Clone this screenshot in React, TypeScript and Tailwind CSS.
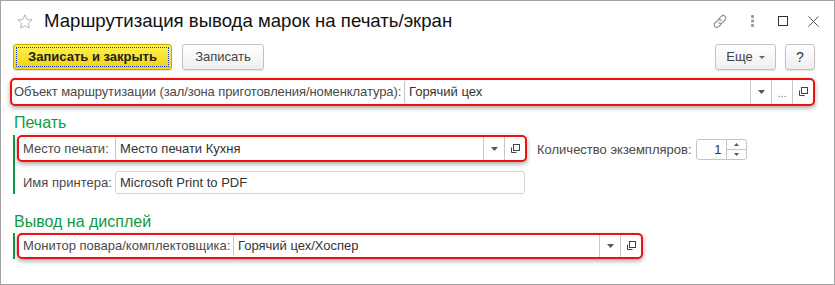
import React from "react";

const Arrow = () => (
  <svg width="7" height="4" viewBox="0 0 7 4"><path d="M0 0h7L3.5 4z" fill="#555" /></svg>
);

const OpenIcon = () => (
  <svg width="12" height="12" viewBox="0 0 12 12" fill="none" stroke="#444" strokeWidth="1">
    <rect x="4.5" y="1.5" width="6" height="6" />
    <path d="M2.5 4.5v5h5" />
  </svg>
);

const Btn = ({ children }: { children: React.ReactNode }) => (
  <div className="flex items-center justify-center w-[21px] border-l border-[#c8c8c8]">{children}</div>
);

function RedField({
  label,
  value,
  w,
  h,
  labelW,
  labelPl,
  ellipsis,
  tight,
}: {
  label: string;
  value: string;
  w: string;
  h: string;
  labelW: string;
  labelPl: string;
  ellipsis?: boolean;
  tight?: boolean;
}) {
  return (
    <div className={`flex ${w} ${h} border-2 border-[#f01010] rounded-[5px] bg-white shadow-[0_2px_5px_rgba(0,0,0,0.35)] overflow-hidden`}>
      <div
        className={`flex items-center ${labelW} ${labelPl} shrink-0 text-[#4a4a4a] whitespace-nowrap ${
          tight ? "tracking-[-0.09px]" : ""
        }`}
      >
        {label}
      </div>
      <div className="flex flex-1 border-l border-[#c4c4c4] rounded-l-[3px]">
        <div className="flex-1 flex items-center pl-[4px] text-[#333]">{value}</div>
        <Btn>
          <Arrow />
        </Btn>
        {ellipsis && (
          <Btn>
            <span className="text-[#777] text-[11px] leading-none mt-[3px]">...</span>
          </Btn>
        )}
        <Btn>
          <OpenIcon />
        </Btn>
      </div>
    </div>
  );
}

export default function App() {
  return (
    <div
      className="w-[835px] h-[285px] border border-[#a3a3a3] bg-white overflow-hidden text-[13px] flex flex-col"
      style={{ fontFamily: '"Liberation Sans", Arial, sans-serif' }}
    >
      {/* Title */}
      <div className="h-[40px] flex items-center shrink-0">
        <svg className="ml-[16px]" width="16" height="15" viewBox="0 0 16 15" fill="none" stroke="#b5b5b5" strokeWidth="1">
          <path d="M8 0.8l2.1 4.6 5 .5-3.8 3.4 1.1 4.9L8 11.7l-4.4 2.5 1.1-4.9L0.9 5.9l5-.5z" />
        </svg>
        <div className="ml-[11px] text-[18.6px] text-[#111] whitespace-nowrap">Маршрутизация вывода марок на печать/экран</div>
        <div className="ml-auto flex items-center pr-[15px]">
          <svg width="16" height="15" viewBox="0 0 16 15" fill="none" stroke="#8a8a8a" strokeWidth="1.1" strokeLinecap="round">
            <path d="M7 4.6l2.3-2.3a2.6 2.6 0 0 1 3.7 3.7l-2.6 2.6a2.6 2.6 0 0 1-3.7 0" />
            <path d="M9 10.4l-2.3 2.3a2.6 2.6 0 0 1-3.7-3.7l2.6-2.6a2.6 2.6 0 0 1 3.7 0" />
          </svg>
          <svg className="ml-[23px]" width="3" height="12" viewBox="0 0 3 12" fill="#999">
            <rect x="0" y="0" width="3" height="3" rx="1" />
            <rect x="0" y="4.5" width="3" height="3" rx="1" />
            <rect x="0" y="9" width="3" height="3" rx="1" />
          </svg>
          <svg className="ml-[24px]" width="10" height="10" viewBox="0 0 10 10" fill="none" stroke="#333" strokeWidth="1">
            <rect x="0.5" y="0.5" width="9" height="9" />
          </svg>
          <svg className="ml-[20px]" width="11" height="11" viewBox="0 0 11 11" fill="none" stroke="#555" strokeWidth="1">
            <path d="M0.5 0.5l10 10M10.5 0.5l-10 10" />
          </svg>
        </div>
      </div>

      {/* Command bar */}
      <div className="mt-[3px] h-[26px] flex shrink-0 pl-[12px] pr-[19px]">
        <div className="w-[159px] h-[26px] rounded-[3px] border border-[#c9a800] bg-gradient-to-b from-[#fff34d] to-[#f2d000] p-[2px] shadow-[0_1px_1px_rgba(0,0,0,0.15)]">
          <div className="h-full border border-dotted border-[#2040c0] flex items-center justify-center font-bold text-[#222]">
            Записать и закрыть
          </div>
        </div>
        <div className="ml-[10px] w-[82px] h-[26px] rounded-[3px] border border-[#c2c2c2] bg-gradient-to-b from-white to-[#efefef] flex items-center justify-center text-[#444] shadow-[0_1px_1px_rgba(0,0,0,0.12)]">
          Записать
        </div>
        <div className="ml-auto w-[61px] h-[26px] rounded-[3px] border border-[#c2c2c2] bg-gradient-to-b from-white to-[#efefef] flex items-center justify-center text-[#444] gap-[6px] shadow-[0_1px_1px_rgba(0,0,0,0.12)]">
          <span>Еще</span>
          <svg width="6" height="3" viewBox="0 0 6 3">
            <path d="M0 0h6L3 3z" fill="#666" />
          </svg>
        </div>
        <div className="ml-[9px] w-[30px] h-[26px] rounded-[3px] border border-[#c2c2c2] bg-gradient-to-b from-white to-[#efefef] flex items-center justify-center text-[#333] text-[14px] shadow-[0_1px_1px_rgba(0,0,0,0.12)]">
          ?
        </div>
      </div>

      {/* Routing object */}
      <div className="mt-[8px] ml-[9px] shrink-0">
        <RedField
          label="Объект маршрутизации (зал/зона приготовления/номенклатура):"
          value="Горячий цех"
          w="w-[805px]"
          h="h-[28px]"
          labelW="w-[392px]"
          labelPl="pl-[2px]"
          ellipsis
          tight
        />
      </div>

      {/* Печать */}
      <div className="mt-[7px] ml-[13px] h-[20px] leading-[20px] text-[16px] text-[#119b3c] shrink-0">Печать</div>
      <div className="mt-[2px] ml-[12px] flex shrink-0">
        <div className="w-[2px] bg-[#0f9a46]" />
        <div className="ml-[2px] flex flex-col">
          <div className="flex items-center">
            <RedField
              label="Место печати:"
              value="Место печати Кухня"
              w="w-[510px]"
              h="h-[27px]"
              labelW="w-[96px]"
              labelPl="pl-[4px]"
            />
            <div className="ml-[10px] text-[#4a4a4a] whitespace-nowrap mt-[2px]">Количество экземпляров:</div>
            <div className="ml-[4px] mt-[2px] w-[51px] h-[21px] border border-[#c4c4c4] rounded-[3px] flex bg-white">
              <div className="flex-1 flex items-center justify-end pr-[4px] text-[#333]">1</div>
              <div className="w-[20px] border-l border-[#c4c4c4] flex flex-col">
                <div className="flex-1 flex items-center justify-center border-b border-[#c4c4c4]">
                  <svg width="5" height="3" viewBox="0 0 5 3">
                    <path d="M0 3h5L2.5 0z" fill="#555" />
                  </svg>
                </div>
                <div className="flex-1 flex items-center justify-center">
                  <svg width="5" height="3" viewBox="0 0 5 3">
                    <path d="M0 0h5L2.5 3z" fill="#555" />
                  </svg>
                </div>
              </div>
            </div>
          </div>
          <div className="mt-[9px] flex items-center h-[23px]">
            <div className="w-[98px] pl-[6px] text-[#4a4a4a] whitespace-nowrap">Имя принтера:</div>
            <div className="w-[410px] h-[23px] border border-[#d4d4d4] rounded-[3px] flex items-center pl-[4px] text-[#333]">
              Microsoft Print to PDF
            </div>
          </div>
        </div>
      </div>

      {/* Вывод на дисплей */}
      <div className="mt-[18px] ml-[13px] h-[20px] leading-[20px] text-[16px] text-[#119b3c] shrink-0">Вывод на дисплей</div>
      <div className="mt-[1px] ml-[12px] flex shrink-0">
        <div className="w-[2px] bg-[#0f9a46]" />
        <div className="ml-[2px]">
          <RedField
            label="Монитор повара/комплектовщика:"
            value="Горячий цех/Хоспер"
            w="w-[626px]"
            h="h-[26px]"
            labelW="w-[214px]"
            labelPl="pl-[4px]"
          />
        </div>
      </div>
    </div>
  );
}
